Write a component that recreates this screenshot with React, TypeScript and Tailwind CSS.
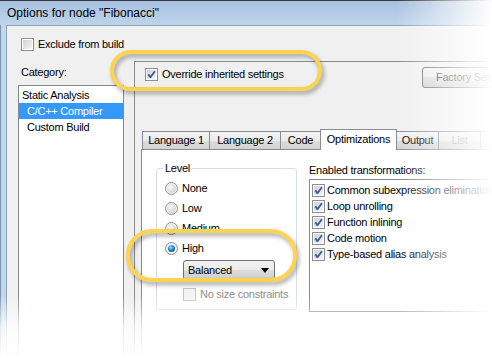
import React from "react";

function CheckBox({ checked = false, disabled = false }: { checked?: boolean; disabled?: boolean }) {
  return (
    <span
      className={`relative flex h-[13px] w-[13px] shrink-0 items-center justify-center border ${
        disabled ? "border-[#c4c4c4] bg-[#f4f4f4]" : "border-[#8e8f8f] bg-white"
      }`}
    >
      <span
        className={`h-[9px] w-[9px] ${
          disabled ? "bg-[#f4f4f4]" : "bg-gradient-to-br from-[#cfd1d3] to-[#f6f6f6]"
        }`}
      />
      {checked && (
        <svg className="absolute inset-0" width="11" height="11" viewBox="0 0 11 11">
          <path d="M2.2 5.4 L4.4 8.2 L8.9 2.2" fill="none" stroke="#3e59a3" strokeWidth="1.9" strokeLinejoin="round" />
        </svg>
      )}
    </span>
  );
}

function Radio({ checked = false }: { checked?: boolean }) {
  return (
    <span className="flex h-[13px] w-[13px] shrink-0 items-center justify-center rounded-full border border-[#8e8f8f] bg-[#f4f4f4]">
      {checked ? (
        <span className="h-[7px] w-[7px] rounded-full bg-[radial-gradient(circle_at_40%_35%,#9ee0ff_0%,#1f86cf_45%,#0b3d70_100%)]" />
      ) : (
        <span className="h-[9px] w-[9px] rounded-full bg-[radial-gradient(circle_at_40%_35%,#f8f8f8_0%,#d6d6d6_70%,#c4c4c4_100%)]" />
      )}
    </span>
  );
}

const tabs = [
  { label: "Language 1", w: "w-[68px]" },
  { label: "Language 2", w: "w-[72px]" },
  { label: "Code", w: "w-[41px]" },
  { label: "Optimizations", w: "w-[77px]", active: true },
  { label: "Output", w: "w-[43px]" },
  { label: "List", w: "w-[43px]", dim: true },
  { label: "Extra", w: "w-[50px]", dim: true },
];

const transforms = [
  "Common subexpression elimination",
  "Loop unrolling",
  "Function inlining",
  "Code motion",
  "Type-based alias analysis",
];

const btn =
  "rounded-[3px] border border-[#707070] bg-[linear-gradient(#f2f2f2_0%,#ebebeb_50%,#dddddd_50%,#cfcfcf_100%)]";

export default function App() {
  return (
    <div className="relative h-[360px] w-[492px] overflow-hidden bg-white text-[11px] leading-none tracking-[-0.25px] text-black [font-family:'Liberation_Sans',Arial,sans-serif]">
      <div className="flex h-full flex-col border-t border-[#3a3a3a] bg-[#b9cfe8]">
        {/* Title bar */}
        <div className="flex h-[24px] shrink-0 items-center bg-gradient-to-b from-[#a7c1de] to-[#bed4ec] pl-[7px] text-[12px] tracking-normal">
          Options for node "Fibonacci"
        </div>

        <div className="flex min-h-0 flex-1 border-l border-[#7f93ab]">
          <div className="w-[5px] shrink-0 bg-[#c3d7ee]" />
          <div className="flex min-w-0 flex-1 flex-col overflow-hidden border-l border-t border-[#8da2ba] bg-[#f0f0f0]">
            {/* Exclude from build */}
            <div className="mt-[12px] flex shrink-0 items-center gap-[4px] pl-[14px]">
              <CheckBox />
              <span>Exclude from build</span>
            </div>

            <div className="mt-[10px] flex min-h-0 flex-1">
              {/* Category */}
              <div className="ml-[11px] flex w-[106px] shrink-0 flex-col">
                <div className="mt-[6px] pl-[3px]">Category:</div>
                <div className="mt-[7px] h-[300px] border border-[#828790] bg-white pt-[1px]">
                  <div className="flex h-[16px] items-center pl-[3px]">Static Analysis</div>
                  <div className="flex h-[16px] items-center bg-[#3399ff] pl-[8px] text-white">C/C++ Compiler</div>
                  <div className="flex h-[16px] items-center pl-[8px]">Custom Build</div>
                </div>
              </div>

              {/* Settings panel */}
              <div className="ml-[10px] flex min-w-0 flex-1 flex-col border-l border-t border-[#8c8c8c]">
                <div className="mt-[5px] flex shrink-0 items-start pl-[10px]">
                  <div className="flex w-[277px] shrink-0 items-center gap-[4px] pt-[1px]">
                    <CheckBox checked />
                    <span>Override inherited settings</span>
                  </div>
                  <div className={`flex h-[21px] w-[100px] shrink-0 items-center pl-[13px] text-[#333] ${btn}`}>
                    Factory Settings
                  </div>
                </div>

                {/* Tabs */}
                <div className="ml-[6px] mt-[41px] flex min-h-0 flex-1 flex-col">
                  <div className="flex h-[20px] shrink-0 items-end pl-[2px]">
                    {tabs.map((t) =>
                      t.active ? (
                        <div
                          key={t.label}
                          className={`relative z-10 -mb-px -ml-px flex h-[21px] ${t.w} shrink-0 items-start justify-center border border-b-0 border-[#898c95] bg-white pt-[4px]`}
                        >
                          {t.label}
                        </div>
                      ) : (
                        <div
                          key={t.label}
                          className={`-ml-px flex h-[18px] ${t.w} shrink-0 items-center justify-center border border-b-0 border-[#898c95] bg-[linear-gradient(#f3f3f3_0%,#ebebeb_50%,#dddddd_50%,#d3d3d3_100%)] ${
                            t.dim ? "text-[#9a9a9a]" : ""
                          }`}
                        >
                          {t.label}
                        </div>
                      )
                    )}
                  </div>

                  <div className="flex min-h-0 flex-1 border-l border-t border-[#898c95] bg-white">
                    {/* Level group */}
                    <fieldset className="ml-[14px] mt-[13px] h-[147px] w-[141px] shrink-0 rounded-[3px] border border-[#d5dfe5] pl-[8px]">
                      <legend className="ml-[-2px] px-[2px]">Level</legend>
                      <div className="mt-[4px] flex flex-col">
                        {["None", "Low", "Medium", "High"].map((l) => (
                          <div key={l} className="flex h-[20px] items-center gap-[4px]">
                            <Radio checked={l === "High"} />
                            <span>{l}</span>
                          </div>
                        ))}
                      </div>
                      <div className={`ml-[18px] mt-[2px] flex h-[20px] w-[92px] items-center justify-between px-[4px] ${btn}`}>
                        <span>Balanced</span>
                        <svg width="8" height="5" viewBox="0 0 8 5" className="mr-[1px]">
                          <path d="M0 0 H8 L4 5 Z" fill="#000" />
                        </svg>
                      </div>
                      <div className="ml-[18px] mt-[8px] flex items-center gap-[4px] whitespace-nowrap text-[#8d8d8d]">
                        <CheckBox disabled />
                        <span>No size constraints</span>
                      </div>
                    </fieldset>

                    {/* Enabled transformations */}
                    <div className="ml-[12px] flex min-w-0 flex-1 flex-col">
                      <div className="mt-[15px] h-[14px] whitespace-nowrap">Enabled transformations:</div>
                      <div className="h-[133px] w-[300px] border border-[#828790] bg-white pt-[2px]">
                        {transforms.map((t) => (
                          <div key={t} className="flex h-[16px] items-center gap-[2px] whitespace-nowrap pl-[2px]">
                            <CheckBox checked />
                            <span>{t}</span>
                          </div>
                        ))}
                      </div>
                    </div>
                  </div>
                </div>
              </div>
            </div>
          </div>
        </div>
      </div>

      {/* Highlight rings */}
      <div className="absolute left-[110px] top-[50px] h-[41px] w-[212px] rounded-full border-[4px] border-[#fdd352] drop-shadow-[2px_3px_2px_rgba(0,0,0,0.35)]" />
      <div className="absolute left-[126px] top-[229px] h-[53px] w-[171px] rounded-[26px] border-[4px] border-[#fdd352] drop-shadow-[2px_3px_2px_rgba(0,0,0,0.35)]" />

      {/* Edge fades */}
      <div className="absolute right-0 top-0 h-full w-[95px] bg-gradient-to-r from-transparent to-white" />
      <div className="absolute bottom-0 left-0 h-[65px] w-full bg-gradient-to-b from-transparent via-white/80 to-white" />
    </div>
  );
}
